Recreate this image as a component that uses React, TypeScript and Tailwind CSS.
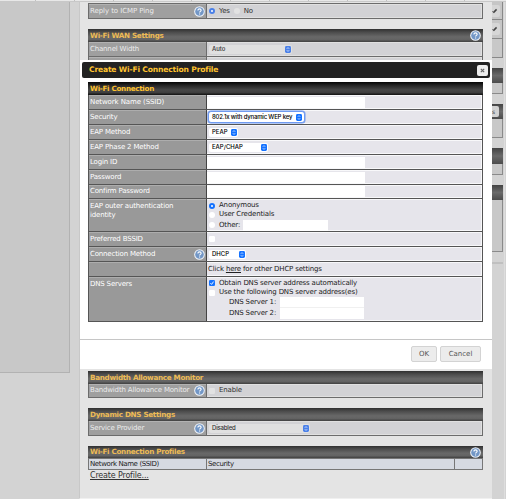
import type { ReactNode } from "react";
import { clsx } from "clsx";

// ── Small form controls ──────────────────────────────────────────────────
function HelpIcon() {
  return (
    <svg viewBox="0 0 12 12" className="size-[11px] flex-shrink-0">
      <circle cx="6" cy="6" r="5.8" fill="#eef2f8" />
      <circle cx="6" cy="6" r="4.7" fill="#7397c6" />
      <path
        d="M4.3 4.9C4.3 3.7 5 3.1 6 3.1s1.8.6 1.8 1.6C7.8 5.8 6.1 5.9 6.1 7.1M6.1 8.2v1"
        fill="none"
        stroke="#fff"
        strokeWidth="1.2"
      />
    </svg>
  );
}

function Select({ children, className, textClass, dim, focused }: {
  children: ReactNode;
  className: string;
  textClass?: string;
  dim?: boolean;
  focused?: boolean;
}) {
  return (
    <div
      className={clsx(
        "flex items-center justify-between pl-[3px] font-['Inter',sans-serif] text-[6px] font-medium leading-none",
        focused
          ? "h-[12px] rounded-[3px] border border-[#6f9af0] bg-white pr-[2px] shadow-[0_0_0_0.5px_#6f9af0]"
          : "h-[9px] rounded-[2px] pr-px",
        !focused && (dim ? "bg-[#e0e0e0]" : "bg-white"),
        dim ? "text-[#333]" : "text-black",
        className,
      )}
    >
      <span className={clsx("whitespace-nowrap", textClass)}>{children}</span>
      <svg viewBox="0 0 6 7" className="h-[7px] w-[6px] flex-shrink-0">
        <rect width="6" height="7" rx="1.4" fill={dim ? "#4a80e8" : "#1472ff"} />
        <path d="M1.8 2.8 3 1.6l1.2 1.2M1.8 4.2 3 5.4l1.2-1.2" fill="none" stroke="#fff" strokeWidth=".7" />
      </svg>
    </div>
  );
}

function Radio({ checked, dim }: { checked?: boolean; dim?: boolean }) {
  return (
    <span
      className={clsx(
        "flex size-[6px] flex-shrink-0 items-center justify-center rounded-full",
        checked ? (dim ? "bg-[#4a80e8]" : "bg-[#1472ff]") : dim ? "bg-[#e2e2e2]" : "bg-white",
      )}
    >
      {checked && <span className="size-[2px] rounded-full bg-white" />}
    </span>
  );
}

function Checkbox({ checked, dim }: { checked?: boolean; dim?: boolean }) {
  return (
    <svg viewBox="0 0 6 6" className="size-[6px] flex-shrink-0">
      <rect width="6" height="6" rx="1.2" fill={checked ? "#1472ff" : dim ? "#e2e2e2" : "#fff"} />
      {checked && <path d="M1.4 3.1 2.6 4.4 4.6 1.6" fill="none" stroke="#fff" strokeWidth=".9" />}
    </svg>
  );
}

// ── Table pieces ─────────────────────────────────────────────────────────
function TableHeader({ title, dim, help, className }: {
  title: string;
  dim?: boolean;
  help?: boolean;
  className: string;
}) {
  return (
    <div
      className={clsx(
        "flex items-center justify-between px-[2px] text-[7.2px] font-bold tracking-[-0.3px]",
        dim
          ? "bg-[linear-gradient(#303030,#4c4c4c_25%,#686868_60%,#646464_80%,#404040)] text-[#edbb55]"
          : "bg-[linear-gradient(#050505,#242424_25%,#464646_60%,#404040_80%,#101010)] text-[#ffc22e]",
        className,
      )}
    >
      <span>{title}</span>
      {help && <HelpIcon />}
    </div>
  );
}

function Row({ label, labelClass, children, className, dim, help, top }: {
  label?: ReactNode;
  labelClass?: string;
  children?: ReactNode;
  className: string;
  dim?: boolean;
  help?: boolean;
  top?: boolean;
}) {
  return (
    <div className={clsx("flex border-x border-b", dim ? "border-[#6c6c6c]" : "border-[#555]", className)}>
      <div
        className={clsx(
          "flex w-[118px] flex-shrink-0 justify-between border-r pl-px pr-px leading-[9px]",
          top ? "items-start pt-[3px]" : "items-center",
          dim
            ? "border-[#6c6c6c] bg-[#9f9f9f] text-[#ececec] shadow-[inset_0_1px_#b2b2b2]"
            : "border-[#444] bg-[#999] text-white shadow-[inset_0_1px_#adadad]",
        )}
      >
        <span className={labelClass}>{label}</span>
        {help && <HelpIcon />}
      </div>
      <div
        className={clsx(
          "flex flex-1 border border-l-0 pl-[2px]",
          top ? "items-start" : "items-center",
          dim ? "border-[#e0e0e0] bg-[#d2d2d5] text-[#333]" : "border-[#f8f8fa] bg-[#e6e5eb] text-[#222]",
        )}
      >
        {children}
      </div>
    </div>
  );
}

function TextInput() {
  return <div className="-ml-[2px] h-[11px] w-[158px] bg-white" />;
}

// ── Page behind the dialog ───────────────────────────────────────────────
function PageSection() {
  return (
    <main className="flex w-[413px] flex-col border-b border-b-[#f0f0f0] border-l border-l-[#c8c8c8] bg-[#e4e4e4] pl-[8px] pr-[9px]">
      <Row dim help label="Reply to ICMP Ping" labelClass="tracking-[-0.08px]" className="mt-px h-[16px] border-t">
        <div className="flex items-center gap-1">
          <Radio dim checked />
          <span>Yes</span>
          <Radio dim />
          <span>No</span>
        </div>
      </Row>
      <TableHeader dim help title="Wi-Fi WAN Settings" className="mt-[10px] h-[13px]" />
      <Row dim label="Channel Width" className="h-[15px]">
        <Select dim className="w-[83px]" textClass="tracking-normal">Auto</Select>
      </Row>
      <Row dim className="h-[14px]" />

      <TableHeader dim title="Bandwidth Allowance Monitor" className="mt-[300px] h-[13px]" />
      <Row dim help label="Bandwidth Allowance Monitor" className="h-[14px]">
        <div className="flex items-center gap-1">
          <Checkbox dim />
          <span>Enable</span>
        </div>
      </Row>
      <TableHeader dim title="Dynamic DNS Settings" className="mt-[10px] h-[13px]" />
      <Row dim help label="Service Provider" className="h-[15px]">
        <Select dim className="w-[101px]">Disabled</Select>
      </Row>
      <TableHeader dim help title="Wi-Fi Connection Profiles" className="mt-[10px] h-[12px]" />
      <div className="flex h-[12px] items-stretch border border-[#777] bg-[#d6dae2] leading-[10px] text-[#222]">
        <span className="w-[118px] border-r border-[#777] pl-px tracking-[-0.38px]">Network Name (SSID)</span>
        <span className="w-[248px] border-r border-[#777] pl-px tracking-[-0.38px]">Security</span>
      </div>
      <a className="mt-px pl-[2px] text-[8px] leading-[9px] text-[#333] underline">Create Profile...</a>
    </main>
  );
}

// ── Dialog ───────────────────────────────────────────────────────────────
function ProfileDialog() {
  return (
    <section className="absolute left-[80px] top-[60px] flex h-[309px] w-[412px] flex-col bg-white">
      <div className="mx-[2px] mt-[2px] flex h-4 items-center justify-between rounded-[2px] bg-[#222] pl-[7px] pr-[2px]">
        <h1 className="text-[7.6px] font-bold text-[#ffc22e]">Create Wi-Fi Connection Profile</h1>
        <button className="flex size-[11px] items-center justify-center rounded-[2px] bg-[#eee]">
          <svg viewBox="0 0 6 6" className="size-[5px]">
            <path d="M1 1 5 5M5 1 1 5" stroke="#666" strokeWidth="1.4" />
          </svg>
        </button>
      </div>

      <div className="ml-2 mr-[9px] mt-1">
        <TableHeader title="Wi-Fi Connection" className="h-[13px]" />
        <Row label="Network Name (SSID)" labelClass="tracking-[-0.1px]" className="h-[15px]"><TextInput /></Row>
        <Row label="Security" className="h-[15px]">
          <Select focused className="-ml-px w-[97px]" textClass="tracking-[-0.18px]">802.1x with dynamic WEP key</Select>
        </Row>
        <Row label="EAP Method" className="h-[15px]"><Select className="w-[29px]" textClass="tracking-normal">PEAP</Select></Row>
        <Row label="EAP Phase 2 Method" className="h-[15px]"><Select className="w-[59px]" textClass="tracking-normal">EAP/CHAP</Select></Row>
        <Row label="Login ID" className="h-[15px]"><TextInput /></Row>
        <Row label="Password" className="h-[15px]"><TextInput /></Row>
        <Row label="Confirm Password" className="h-[14px]"><TextInput /></Row>
        <Row top label={<>EAP outer authentication<br />identity</>} className="h-[33px]">
          <div className="flex flex-col pt-px leading-[9px]">
            <span className="flex items-center gap-1"><Radio checked />Anonymous</span>
            <span className="flex items-center gap-1"><Radio />User Credentials</span>
            <span className="flex h-[12px] items-center gap-1">
              <Radio />Other:
              <span className="-ml-px h-[11px] w-[85px] bg-white" />
            </span>
          </div>
        </Row>
        <Row label="Preferred BSSID" className="h-[15px]"><Checkbox /></Row>
        <Row help label="Connection Method" className="h-[15px]"><Select className="w-[37px]" textClass="tracking-normal">DHCP</Select></Row>
        <Row className="h-[15px]">
          <span className="-ml-px">Click <u>here</u> for other DHCP settings</span>
        </Row>
        <Row top label="DNS Servers" className="h-[45px]">
          <div className="flex flex-col leading-[9px]">
            <span className="flex h-[10px] items-center gap-1"><Checkbox checked />Obtain DNS server address automatically</span>
            <span className="flex items-center gap-1"><Checkbox />Use the following DNS server address(es)</span>
            <span className="flex h-[11px] items-center gap-[3px] pl-5">
              <span className="w-12">DNS Server 1:</span>
              <span className="h-[11px] w-[84px] border-b border-[#f0f0f0] bg-white" />
            </span>
            <span className="flex h-[11px] items-center gap-[3px] pl-5">
              <span className="w-12">DNS Server 2:</span>
              <span className="h-[11px] w-[84px] bg-white" />
            </span>
          </div>
        </Row>
      </div>

      <div className="mt-[17px] flex justify-end gap-[3px] border-t border-[#c6c6c6] pr-[11px] pt-[6px] text-[#555] tracking-normal">
        <button className="h-4 w-[26px] rounded-[2px] border border-[#d3d3d3] bg-[#ececec]">OK</button>
        <button className="h-4 w-[41px] rounded-[2px] border border-[#d3d3d3] bg-[#ececec]">Cancel</button>
      </div>
    </section>
  );
}

// ── Right edge of the page ───────────────────────────────────────────────
function EdgePanel({ header, body, children }: { header: string; body: string; children?: ReactNode }) {
  return (
    <div className="mb-[10px] w-[11px]">
      <div className={clsx("flex items-center bg-linear-to-b from-[#444] via-[#6a6a6a] to-[#4c4c4c]", header)}>
        {children}
      </div>
      <div className={clsx("border-b border-r border-[#8a8a8a] bg-[#c8c8c8]", body)} />
    </div>
  );
}

function EditCell({ className }: { className: string }) {
  return (
    <div className={clsx("flex items-center border-b border-r border-[#888] bg-[#c6c6c6]", className)}>
      <div className="flex h-[12px] w-[8px] items-center rounded-r-[2px] bg-[#d6d6d6]">
        <svg viewBox="0 0 6 6" className="size-[6px]">
          <path d="M.3 3.2 1.4 4.6" stroke="#777" strokeWidth="1" />
          <path d="M1.4 4.6 4.6 1.4" stroke="#444" strokeWidth="1.5" />
        </svg>
      </div>
    </div>
  );
}

function RightEdge() {
  return (
    <aside className="flex w-[13px] flex-col border-r border-[#dedede] bg-[#d3d3d3]">
      <div className="mb-[10px] w-[11px]">
        <EditCell className="h-[18px]" />
        <EditCell className="h-[19px]" />
        <div className="h-[19px] border-b border-r border-[#888] bg-[#c8c8c8]" />
      </div>
      <EdgePanel header="h-[15px]" body="h-[11px]" />
      <EdgePanel header="h-[15px]" body="h-[19px]">
        <span className="flex h-[11px] w-[7px] items-center rounded-r-[2px] bg-[#d2d2d2] text-[6px] text-[#333]">s</span>
      </EdgePanel>
      <EdgePanel header="h-[16px]" body="h-[11px]" />
      <EdgePanel header="h-[15px]" body="h-[52px]" />
      <div className="h-[2px] w-[11px] bg-[#c0c0c0]" />
    </aside>
  );
}

const TICKS = [35, 74, 113, 152, 191, 230, 269, 308, 347, 386, 424, 463];

export default function App() {
  return (
    <div className="relative flex h-[499px] w-[506px] flex-col overflow-hidden bg-[#d3d3d3] font-['DejaVu_Sans',Verdana,sans-serif] text-[7px] leading-none tracking-[-0.17px] whitespace-nowrap">
      <div className="flex h-[2px] flex-shrink-0 justify-start border-b border-[#c8c8c8] bg-[#e8e8e8]">
        {TICKS.map((t) => (
          <span key={t} className="mr-[38px] w-px bg-[#c0c0c0] first:ml-[35px]" />
        ))}
      </div>
      <div className="flex flex-1">
        <nav className="mr-[9px] h-[371px] w-[70px] border-b border-r border-[#b2b2b2] bg-[#c8c8c8]" />
        <PageSection />
        <RightEdge />
      </div>
      <ProfileDialog />
    </div>
  );
}
